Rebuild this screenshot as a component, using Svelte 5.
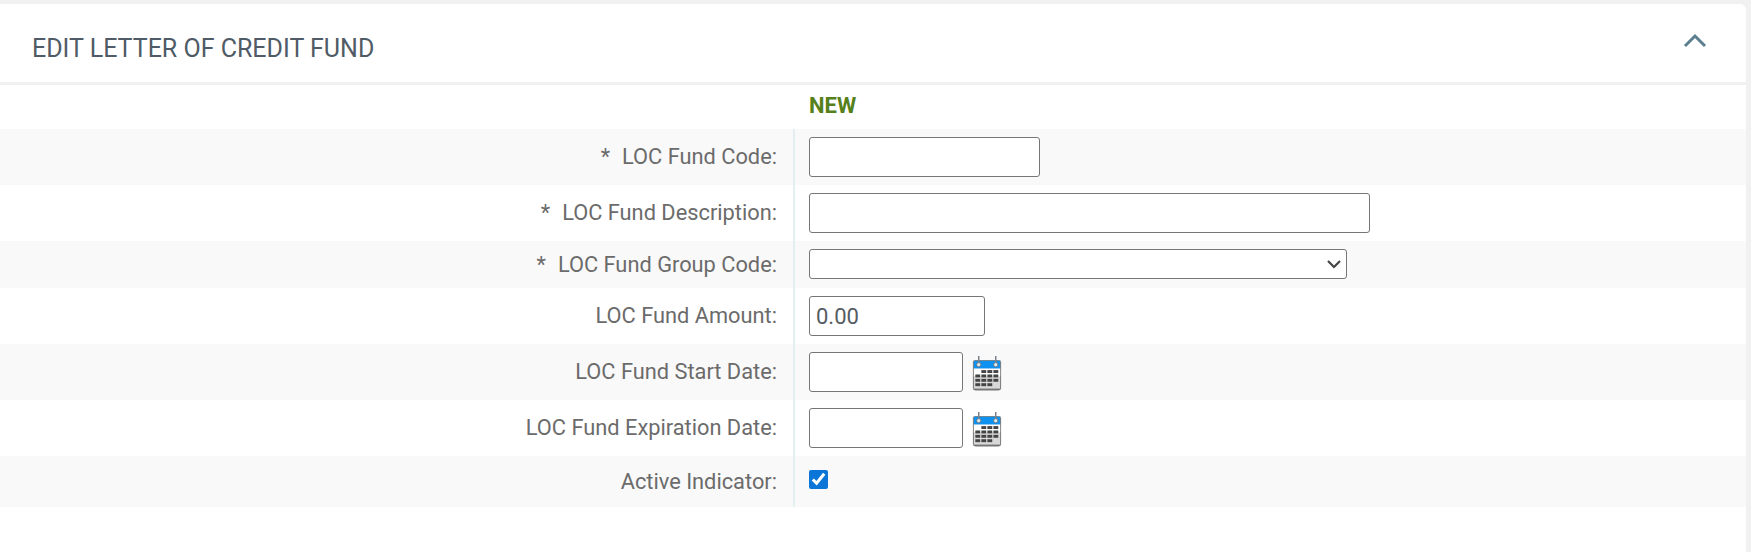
<script>
  const rows = [
    { label: 'LOC Fund Code:', req: true, kind: 'text', cls: 'code', h: 'tall' },
    { label: 'LOC Fund Description:', req: true, kind: 'text', cls: 'desc', h: 'tall' },
    { label: 'LOC Fund Group Code:', req: true, kind: 'select', h: 'mid' },
    { label: 'LOC Fund Amount:', kind: 'text', cls: 'amount', value: '0.00', h: 'tall' },
    { label: 'LOC Fund Start Date:', kind: 'date', cls: 'date', h: 'tall' },
    { label: 'LOC Fund Expiration Date:', kind: 'date', cls: 'date', h: 'tall' },
    { label: 'Active Indicator:', kind: 'check', h: 'short' }
  ];
</script>

<div class="page">
  <section class="card">
    <header class="head">
      <h2>EDIT LETTER OF CREDIT FUND</h2>
      <svg class="chev" width="24" height="16" viewBox="0 0 24 16"><path d="M2 14 L12 4 L22 14" fill="none" stroke="#5b7f8f" stroke-width="3"/></svg>
    </header>
    <div class="status"><span>NEW</span></div>
    {#each rows as r, i}
      <div class="row {r.h}" class:odd={i % 2 === 0}>
        <label class="lab" for={'f' + i}>{#if r.req}<span class="star">*</span>{/if}{r.label}</label>
        <div class="val">
          {#if r.kind === 'text'}
            <input id={'f' + i} class="in {r.cls}" type="text" value={r.value ?? ''} />
          {:else if r.kind === 'select'}
            <div class="selwrap">
              <select id={'f' + i} class="sel"><option></option></select>
              <svg class="arrow" width="16" height="10" viewBox="0 0 16 10"><path d="M2 2 L8 8 L14 2" fill="none" stroke="#444" stroke-width="2.2"/></svg>
            </div>
          {:else if r.kind === 'date'}
            <input id={'f' + i} class="in {r.cls}" type="text" />
            <svg class="cal" width="30" height="35" viewBox="0 0 30 36">
              <rect x="0.5" y="4" width="29" height="31.5" rx="2.5" fill="#767676"/>
              <rect x="1.5" y="5" width="27" height="28.5" fill="#d8d8d8"/>
              <rect x="1.5" y="5" width="27" height="8" fill="#0d92f2"/>
              <rect x="1.5" y="13" width="27" height="8" fill="#fff"/>
              {#each [0,1,2,3] as y}
                {#each [0,1,2,3] as x}
                  {#if !(y === 0 && x === 0) && !(y === 3 && x === 3)}
                    <rect x={3 + x * 6.2} y={14.5 + y * 4.5} width="5" height="3" fill="#444"/>
                  {/if}
                {/each}
              {/each}
              <path d="M6.5 0 V8 M24 0 V8" stroke="#7a8088" stroke-width="1.5"/>
              <circle cx="6.5" cy="9" r="2.2" fill="#dbe8f0" stroke="#6a7078" stroke-width="0.9"/>
              <circle cx="24" cy="9" r="2.2" fill="#dbe8f0" stroke="#6a7078" stroke-width="0.9"/>
            </svg>
          {:else}
            <input id={'f' + i} class="chk" type="checkbox" checked />
          {/if}
        </div>
      </div>
    {/each}
  </section>
</div>

<style>
  :global(body) { margin: 0; background: #fff; }
  .page { width: 1751px; height: 552px; box-sizing: border-box; padding: 4px 5px 0 0; background: #f1f1f1; font-family: Roboto, sans-serif; overflow: hidden; }
  .card { background: #fff; height: 100%; border-top-right-radius: 6px; overflow: hidden; }
  .head { box-sizing: border-box; border-bottom: 3px solid #f1f1f1; display: flex; align-items: center; justify-content: space-between; padding: 0 39px 0 32px; height: 81px; }
  h2 { margin: 0; font-size: 25px; font-weight: 400; color: #4f5b66; padding-top: 11px; }
  .chev { margin-top: -6px; }
  .status { height: 44px; display: flex; align-items: center; padding-left: 809px; padding-bottom: 3px; box-sizing: border-box; }
  .status span { font-size: 22px; font-weight: 700; color: #55801a; }
  .row { display: grid; grid-template-columns: 793px 1fr; }
  .row.odd { background: #f9f9f9; }
  .row.tall { height: 56px; }
  .row.mid { height: 47px; }
  .row.short { height: 51px; }
  .lab { align-self: center; text-align: right; padding-right: 16px; padding-bottom: 2px; font-size: 21.8px; color: #6b6b6b; }
  .row.mid .lab, .row.short .lab { padding-bottom: 0; }
  .star { margin-right: 12px; }
  .val { border-left: 2px solid #e3eeee; padding-left: 14px; display: flex; align-items: center; gap: 9px; }
  .in { box-sizing: border-box; height: 40px; border: 1px solid #767676; border-radius: 3px; background: #fff; padding: 0 6px; font: 22px Roboto, sans-serif; color: #555c63; outline: none; }
  .code { width: 231px; }
  .desc { width: 561px; }
  .amount { width: 176px; }
  .date { width: 154px; }
  .selwrap { position: relative; width: 538px; height: 30px; margin-top: -1px; }
  .sel { appearance: none; width: 100%; height: 100%; box-sizing: border-box; border: 1px solid #767676; border-radius: 3px; background: #fff; }
  .arrow { position: absolute; right: 5px; top: 10px; pointer-events: none; }
  .cal { margin-top: 3px; }
  .chk { width: 19px; height: 19px; margin: -5px 0 0; accent-color: #0b76d8; }
</style>
